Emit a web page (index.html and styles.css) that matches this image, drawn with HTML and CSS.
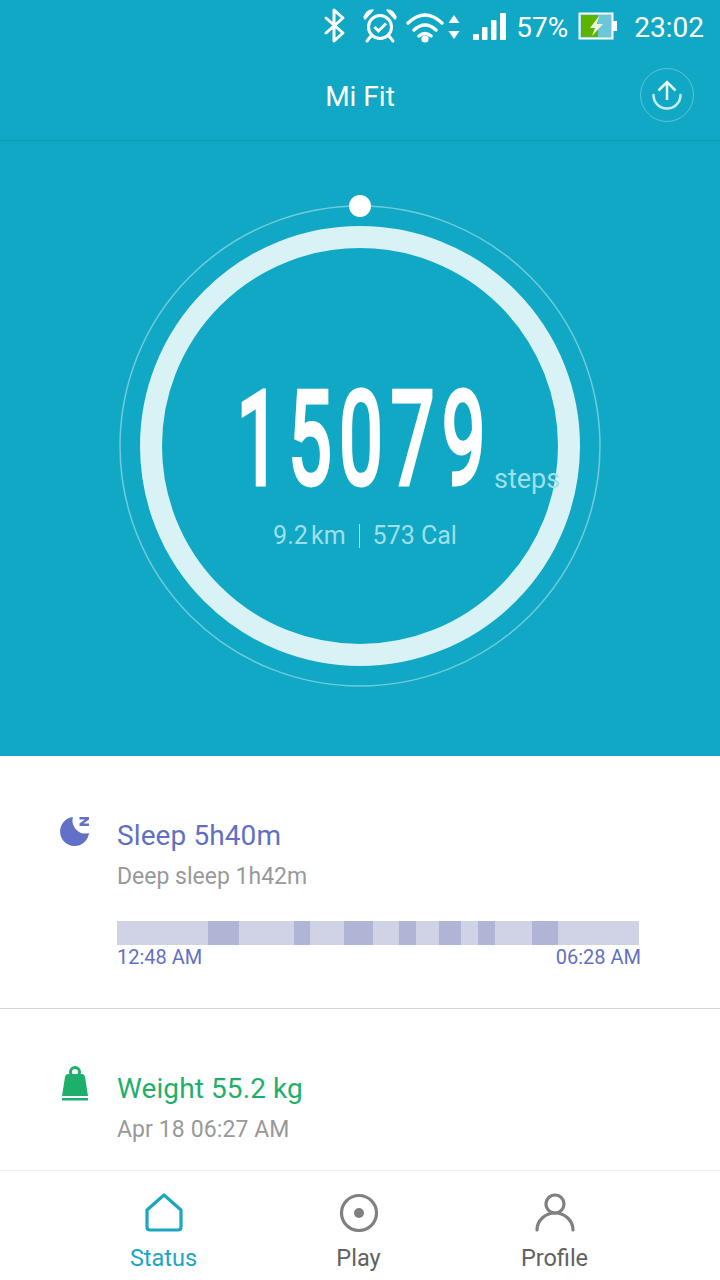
FILE: index.html
```html
<!DOCTYPE html>
<html lang="en">
<head>
    <meta charset="UTF-8">
    <meta name="viewport" content="width=device-width, initial-scale=1.0">
    <title>Mi Fit</title>
    <link rel="stylesheet" href="styles.css">
</head>
<body>
<div class="app">
    <div class="header">
        <div class="statusbar">
            <svg class="st-bt" width="24" height="38" viewBox="0 0 24 38"><polyline points="3,11 20,26 11,34 11,3 20,11 3,26" fill="none" stroke="#fff" stroke-width="3" stroke-linejoin="round" stroke-linecap="round"/></svg>
            <svg class="st-alarm" width="36" height="36" viewBox="0 0 36 36">
                <circle cx="18" cy="19" r="11.5" fill="none" stroke="#fff" stroke-width="3"/>
                <polyline points="12.5,19 16.5,23 24,15.5" fill="none" stroke="#fff" stroke-width="3"/>
                <path d="M2 9 Q5 2 11 2 L3 11 Z M34 9 Q31 2 25 2 L33 11 Z" fill="#fff" stroke="#fff" stroke-width="1.5" stroke-linejoin="round"/>
                <path d="M9 28 L5 33 M27 28 L31 33" stroke="#fff" stroke-width="3" stroke-linecap="round"/>
            </svg>
            <svg class="st-wifi" width="54" height="34" viewBox="0 0 54 34">
                <path d="M2 12 Q19 -4 36 12 M8 19 Q19 9 30 19 M13 25 Q19 20 25 25" transform="translate(0 2)" fill="none" stroke="#fff" stroke-width="3.4" stroke-linecap="round"/>
                <circle cx="19" cy="30" r="3.6" fill="#fff"/>
                <path d="M43 6 L48.500 14 H37.500 Z M43 30 L48.500 22 H37.500 Z" fill="#fff" transform="translate(5 0)"/>
            </svg>
            <svg class="st-signal" width="35" height="30" viewBox="0 0 35 30">
                <rect x="1" y="23" width="6" height="6" rx="1" fill="#fff"/>
                <rect x="10" y="16" width="5.500" height="13" rx="1" fill="#fff"/>
                <rect x="19" y="9" width="5.500" height="20" rx="1" fill="#fff"/>
                <rect x="28" y="2" width="6" height="27" rx="1" fill="#fff"/>
            </svg>
            <span class="st-pct">57%</span>
            <svg class="st-battery" width="39" height="28" viewBox="0 0 39 28">
                <rect x="1.500" y="1.500" width="33" height="25" fill="#6cc6da" stroke="#fff" stroke-width="2"/>
                <rect x="3" y="3" width="17" height="22" fill="#5cb300"/>
                <rect x="35" y="9" width="4" height="10" fill="#fff"/>
                <path d="M21 4 L12 16 H17 L14 24 L25 12 H19 Z" fill="#eaf7d8"/>
            </svg>
            <span class="st-time">23:02</span>
        </div>
        <div class="appbar">
            <span class="appbar-title">Mi Fit</span>
            <a href="#" class="sync-btn">
                <svg width="30" height="32" viewBox="0 0 30 32"><path d="M1.500 16 A13.500 13.500 0 0 0 28.500 16" fill="none" stroke="#c8eef5" stroke-width="2.500" stroke-linecap="round"/><path d="M15 21 V3 M6.500 11.500 L15 3 L23.500 11.500" fill="none" stroke="#e6f8fb" stroke-width="2.500"/></svg>
            </a>
        </div>
    </div>

    <div class="hero">
        <svg class="ring" width="484" height="504" viewBox="0 0 484 504">
            <circle cx="242" cy="252" r="240" fill="none" stroke="#fff" stroke-opacity="0.4" stroke-width="1.500"/>
            <circle cx="242" cy="252" r="209" fill="none" stroke="#d9f2f6" stroke-width="22"/>
            <circle cx="242" cy="12" r="11" fill="#fff"/>
        </svg>
        <div class="counter">
            <span class="steps-num">15079</span>
            <span class="steps-unit">steps</span>
        </div>
        <div class="hero-sub">
            <span class="hero-km">9.2 km</span>
            <span class="hero-sep"></span>
            <span>573 Cal</span>
        </div>
    </div>

    <div class="card card-sleep">
        <svg class="card-icon" width="30" height="30" viewBox="0 0 30 30">
            <path d="M13 1 A14.500 14.500 0 1 0 29 17 A13 13 0 0 1 13 1 Z" fill="#6270c8"/>
            <path d="M19.500 1 H29 V3.500 L23.500 7.500 H29 V10 H19.500 V7.500 L25 3.500 H19.500 Z" fill="#6270c8"/>
        </svg>
        <div class="card-body">
            <div class="card-title sleep-title">Sleep 5h40m</div>
            <div class="card-sub">Deep sleep 1h42m</div>
            <div class="sleep-bar">
                <span class="deep" style="left: 91px; width: 31px"></span>
                <span class="deep" style="left: 177px; width: 16px"></span>
                <span class="deep" style="left: 227px; width: 29px"></span>
                <span class="deep" style="left: 282px; width: 17px"></span>
                <span class="deep" style="left: 322px; width: 22px"></span>
                <span class="deep" style="left: 361px; width: 17px"></span>
                <span class="deep" style="left: 415px; width: 26px"></span>
            </div>
            <div class="sleep-times">
                <span>12:48 AM</span>
                <span>06:28 AM</span>
            </div>
        </div>
    </div>

    <div class="card card-weight">
        <svg class="card-icon" width="28" height="36" viewBox="0 0 28 36">
            <circle cx="14" cy="6" r="4.500" fill="none" stroke="#1eb06b" stroke-width="3"/>
            <path d="M7 8 H21 Q23.500 8 24 11 L27 30 H1 L4 11 Q4.500 8 7 8 Z" fill="#1eb06b"/>
            <rect x="1" y="32" width="26" height="2.500" fill="#1eb06b"/>
        </svg>
        <div class="card-body">
            <div class="card-title weight-title">Weight 55.2 kg</div>
            <div class="card-sub">Apr 18 06:27 AM</div>
        </div>
    </div>

    <div class="tabbar">
        <a href="#" class="tab tab-active">
            <svg width="40" height="40" viewBox="0 0 40 40"><path d="M20 3 L37 18 V35 Q37 38 34 38 H6 Q3 38 3 35 V18 Z" transform="translate(0 -1)" fill="none" stroke="#1ba6c4" stroke-width="3.200" stroke-linejoin="round"/></svg>
            <span>Status</span>
        </a>
        <a href="#" class="tab">
            <svg width="40" height="40" viewBox="0 0 40 40"><circle cx="20" cy="20" r="17.500" fill="none" stroke="#808080" stroke-width="3.200"/><circle cx="20" cy="20" r="5" fill="#808080"/></svg>
            <span>Play</span>
        </a>
        <a href="#" class="tab">
            <svg width="40" height="40" viewBox="0 0 40 40"><circle cx="20" cy="11" r="9" fill="none" stroke="#808080" stroke-width="3.200"/><path d="M2 37 A18 17 0 0 1 38 37" fill="none" stroke="#808080" stroke-width="3.200" stroke-linecap="round"/></svg>
            <span>Profile</span>
        </a>
    </div>
</div>
</body>
</html>
```

FILE: styles.css
```css
body {
    margin: 0;
    font-family: Roboto, "Noto Sans", sans-serif;
    background-color: #fff;
}
.app {
    width: 720px;
    height: 1280px;
    display: flex;
    flex-direction: column;
    overflow: hidden;
}
.header {
    background-color: #10a8c5;
    height: 140px;
    border-bottom: 1px solid #0f98b3;
    flex-shrink: 0;
}
.statusbar {
    height: 52px;
    display: flex;
    align-items: center;
    justify-content: flex-end;
    padding-right: 16px;
    color: #fff;
    font-size: 28px;
}
.st-bt { margin-right: 15px; }
.st-alarm { margin-right: 8px; }
.st-wifi { margin-right: 12px; }
.st-signal { margin-right: 9px; }
.st-battery { margin: 0 17px 0 10px; }
.st-pct, .st-time { padding-top: 2px; }
.appbar {
    height: 88px;
    position: relative;
    display: flex;
    align-items: center;
    justify-content: center;
    color: #fff;
}
.appbar-title {
    font-size: 28px;
    padding-top: 0;
}
.sync-btn {
    position: absolute;
    right: 26px;
    top: 16px;
    width: 52px;
    height: 52px;
    border: 1px solid rgba(255, 255, 255, 0.3);
    border-radius: 50%;
    display: flex;
    align-items: center;
    justify-content: center;
}
.hero {
    background-color: #10a8c5;
    height: 615px;
    flex-shrink: 0;
    position: relative;
    color: #fff;
}
.ring {
    position: absolute;
    left: 118px;
    top: 53px;
}
.counter {
    position: absolute;
    top: 234px;
    left: 0;
    width: 100%;
    height: 130px;
}
/* squeezed and thickened with a stroke to get the tall number look */
.steps-num {
    position: absolute;
    left: 365px;
    top: 0;
    font-size: 129px;
    line-height: 130px;
    -webkit-text-stroke: 5px #fff;
    letter-spacing: 13px;
    transform: translateX(-50%) scaleX(0.6);
}
.steps-unit {
    position: absolute;
    left: 494px;
    top: 88px;
    font-size: 27px;
    color: #9fdfea;
}
.hero-sub {
    position: absolute;
    top: 380px;
    left: 0;
    width: 100%;
    box-sizing: border-box;
    padding-left: 10px;
    display: flex;
    justify-content: center;
    align-items: center;
    font-size: 25px;
    color: #9fdfea;
}
.hero-km {
    word-spacing: -3px;
}
.hero-sep {
    width: 1px;
    height: 24px;
    background-color: #9fdfea;
    margin: 0 13px;
}
.card {
    display: flex;
    align-items: flex-start;
    box-sizing: border-box;
    background-color: #fff;
}
.card-sleep {
    height: 253px;
    padding: 60px 0 0 60px;
    border-bottom: 1px solid #d6d6d6;
}
.card-weight {
    height: 161px;
    padding: 57px 0 0 61px;
}
.card-icon {
    flex-shrink: 0;
}
.card-sleep .card-body { margin-left: 27px; }
.card-weight .card-body { margin-left: 28px; }
.card-title {
    font-size: 28px;
    line-height: 36px;
    letter-spacing: 0.1px;
}
.sleep-title {
    color: #6270c4;
    margin-top: 2px;
}
.weight-title {
    color: #1eb06b;
    margin-top: 5px;
}
.card-sub {
    font-size: 23px;
    line-height: 30px;
    margin-top: 8px;
    color: #999;
}
.weight-title + .card-sub {
    margin-top: 8px;
    letter-spacing: 0.1px;
}
.sleep-bar {
    position: relative;
    width: 522px;
    height: 24px;
    margin-top: 29px;
    background-color: #d0d3e6;
}
.deep {
    position: absolute;
    top: 0;
    height: 24px;
    background-color: #b0b5d6;
}
.sleep-times {
    width: 524px;
    display: flex;
    justify-content: space-between;
    font-size: 20px;
    line-height: 24px;
    color: #6270c4;
}
.tabbar {
    flex: 1;
    border-top: 1px solid #eee;
    display: flex;
    padding: 22px 0 0 0;
}
.tab {
    position: relative;
    display: flex;
    flex-direction: column;
    align-items: center;
    width: 195px;
    color: #616161;
    text-decoration: none;
    font-size: 23.5px;
}
.tab span {
    margin-top: 11px;
}
.tab-active {
    color: #1ba6c4;
    margin-left: 66px;
}
.tab:last-child {
    margin-left: 1px;
}
```
